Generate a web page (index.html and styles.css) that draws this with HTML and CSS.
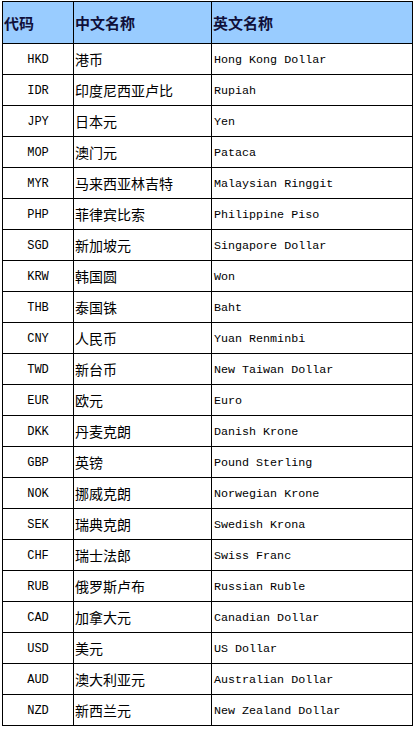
FILE: index.html
```html
<!DOCTYPE html>
<html>
<head>
<meta charset="utf-8">
<link rel="stylesheet" href="styles.css">
</head>
<body>
<table class="ccy">
<colgroup><col class="c1"><col class="c2"><col class="c3"></colgroup>
<thead>
<tr class="head"><th>代码</th><th>中文名称</th><th>英文名称</th></tr>
</thead>
<tbody>
<tr><td class="code">HKD</td><td class="cn">港币</td><td class="en">Hong Kong Dollar</td></tr>
<tr><td class="code">IDR</td><td class="cn">印度尼西亚卢比</td><td class="en">Rupiah</td></tr>
<tr><td class="code">JPY</td><td class="cn">日本元</td><td class="en">Yen</td></tr>
<tr><td class="code">MOP</td><td class="cn">澳门元</td><td class="en">Pataca</td></tr>
<tr><td class="code">MYR</td><td class="cn">马来西亚林吉特</td><td class="en">Malaysian Ringgit</td></tr>
<tr><td class="code">PHP</td><td class="cn">菲律宾比索</td><td class="en">Philippine Piso</td></tr>
<tr><td class="code">SGD</td><td class="cn">新加坡元</td><td class="en">Singapore Dollar</td></tr>
<tr><td class="code">KRW</td><td class="cn">韩国圆</td><td class="en">Won</td></tr>
<tr><td class="code">THB</td><td class="cn">泰国铢</td><td class="en">Baht</td></tr>
<tr><td class="code">CNY</td><td class="cn">人民币</td><td class="en">Yuan Renminbi</td></tr>
<tr><td class="code">TWD</td><td class="cn">新台币</td><td class="en">New Taiwan Dollar</td></tr>
<tr><td class="code">EUR</td><td class="cn">欧元</td><td class="en">Euro</td></tr>
<tr><td class="code">DKK</td><td class="cn">丹麦克朗</td><td class="en">Danish Krone</td></tr>
<tr><td class="code">GBP</td><td class="cn">英镑</td><td class="en">Pound Sterling</td></tr>
<tr><td class="code">NOK</td><td class="cn">挪威克朗</td><td class="en">Norwegian Krone</td></tr>
<tr><td class="code">SEK</td><td class="cn">瑞典克朗</td><td class="en">Swedish Krona</td></tr>
<tr><td class="code">CHF</td><td class="cn">瑞士法郎</td><td class="en">Swiss Franc</td></tr>
<tr><td class="code">RUB</td><td class="cn">俄罗斯卢布</td><td class="en">Russian Ruble</td></tr>
<tr><td class="code">CAD</td><td class="cn">加拿大元</td><td class="en">Canadian Dollar</td></tr>
<tr><td class="code">USD</td><td class="cn">美元</td><td class="en">US Dollar</td></tr>
<tr><td class="code">AUD</td><td class="cn">澳大利亚元</td><td class="en">Australian Dollar</td></tr>
<tr><td class="code">NZD</td><td class="cn">新西兰元</td><td class="en">New Zealand Dollar</td></tr>
</tbody>
</table>
</body>
</html>
```
FILE: styles.css
```css
html, body {
  margin: 0;
  padding: 0;
  background: #ffffff;
}
body {
  padding: 1px 0 0 2px;
  font-family: "Noto Sans CJK SC", sans-serif;
}
.ccy {
  border-collapse: collapse;
  table-layout: fixed;
  width: 410px;
}
.c1 { width: 71px; }
.c2 { width: 138px; }
.c3 { width: 201px; }
.ccy th, .ccy td {
  border: 1px solid #000000;
  padding: 0;
  overflow: hidden;
  white-space: nowrap;
  line-height: 18px;
  box-sizing: border-box;
}
.head th {
  height: 42px;
  background: #99ccff;
  text-align: left;
  font-family: "Noto Sans CJK SC", sans-serif;
  font-weight: bold;
  font-size: 15px;
  color: #10103a;
  padding-left: 1px;
}
.ccy td {
  height: 31px;
  color: #000000;
  vertical-align: middle;
}
.code {
  text-align: center;
  font-family: "Liberation Mono", monospace;
  font-size: 12px;
  padding-top: 2px !important;
}
.cn {
  font-family: "Noto Sans CJK SC", sans-serif;
  font-size: 14px;
  padding-left: 1px !important;
}
.en {
  font-family: "Liberation Mono", monospace;
  font-size: 11.7px;
  padding-left: 2px !important;
  padding-top: 2px !important;
}
```
